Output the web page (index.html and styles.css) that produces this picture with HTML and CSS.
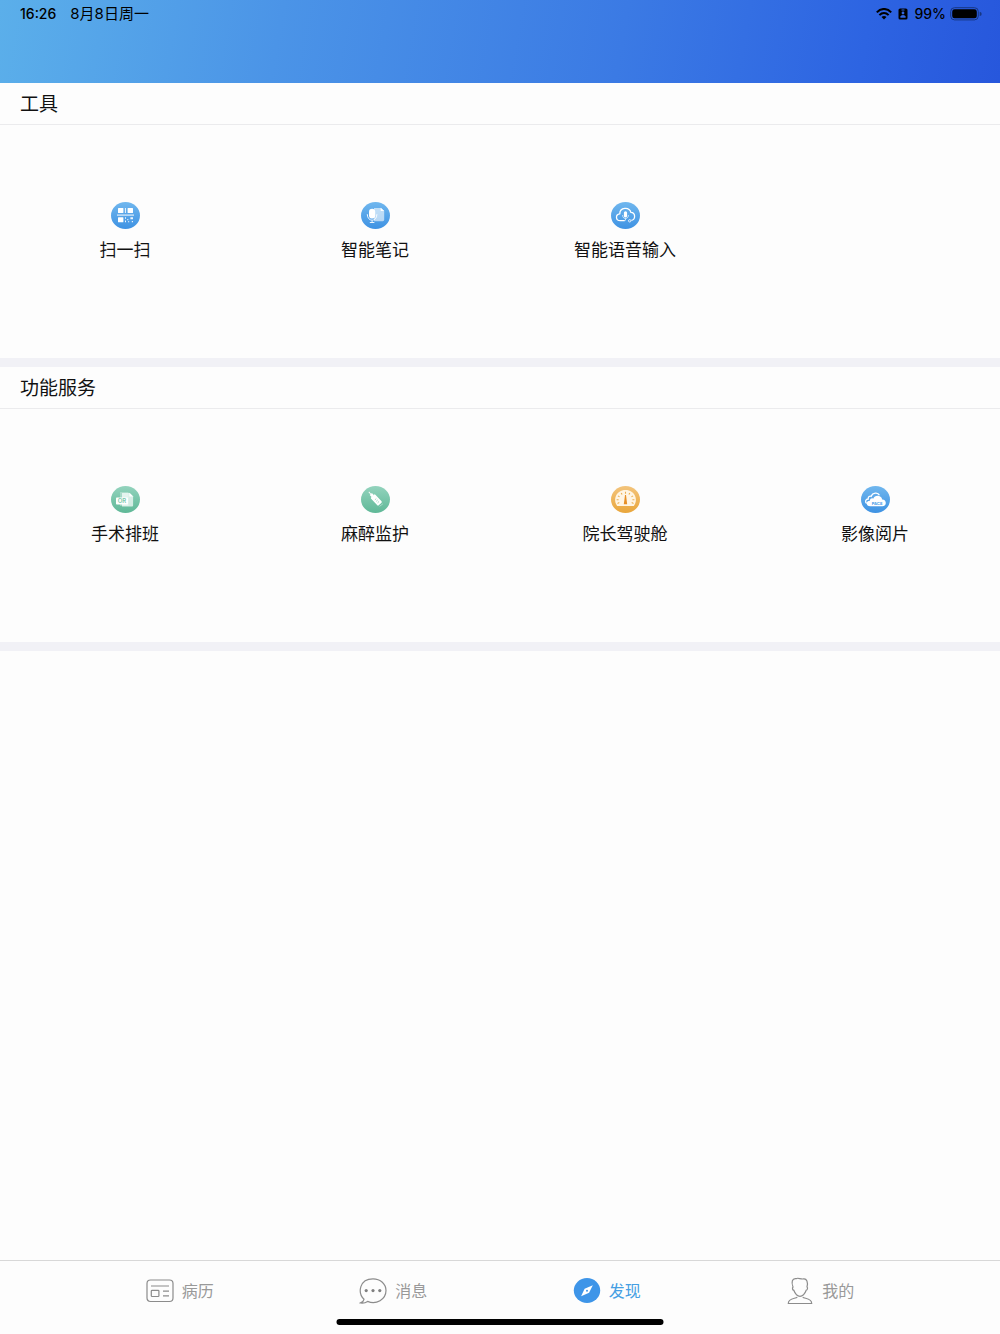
FILE: index.html
```html
<!DOCTYPE html>
<html lang="zh-CN">
<head>
    <meta charset="UTF-8">
    <meta name="viewport" content="width=device-width, initial-scale=1.0">
    <title>发现</title>
    <link rel="stylesheet" href="styles.css">
</head>
<body>

<!-- Gradients shared by the round icons -->
<svg class="defs" width="0" height="0" aria-hidden="true">
    <defs>
        <linearGradient id="blue" x1="0" y1="0" x2="0" y2="1">
            <stop offset="0" stop-color="#70b7ee"/>
            <stop offset="1" stop-color="#3e92e3"/>
        </linearGradient>
        <linearGradient id="green" x1="0" y1="0" x2="0" y2="1">
            <stop offset="0" stop-color="#93d3bd"/>
            <stop offset="1" stop-color="#5fb897"/>
        </linearGradient>
        <linearGradient id="orange" x1="0" y1="0" x2="0" y2="1">
            <stop offset="0" stop-color="#f3c47c"/>
            <stop offset="1" stop-color="#e9a63b"/>
        </linearGradient>
    </defs>
</svg>

<header class="header">
    <div class="status-bar">
        <div class="status-group status-left">
            <span>16:26</span>
            <span class="status-date">8月8日周一</span>
        </div>
        <div class="status-group">
            <svg width="16" height="12" viewBox="0 0 16 12" aria-hidden="true">
                <g fill="none" stroke="#000" stroke-width="2">
                    <path d="M.8 4.4C5-.2 11-.2 15.2 4.4"/>
                    <path d="M3.4 7.1c2.7-2.9 6.5-2.9 9.2 0"/>
                </g>
                <path d="M5.5 9.1c1.5-1.4 3.5-1.4 5 0L8 11.6z"/>
            </svg>
            <svg class="status-badge" width="10" height="12" viewBox="0 0 10 12" aria-hidden="true">
                <rect x=".5" y=".5" width="9" height="11" rx="1.6"/>
                <g fill="#3166e1">
                    <rect x="3.4" y="1.4" width="3.2" height="1" rx=".5"/>
                    <circle cx="5" cy="5" r="1.4"/>
                    <path d="M2.4 9.8V8.6Q2.8 7 5 7t2.6 1.6v1.2z"/>
                </g>
            </svg>
            <span>99%</span>
            <svg width="32" height="14" viewBox="0 0 32 14" aria-hidden="true">
                <rect x=".7" y=".7" width="27.6" height="12.2" rx="3.8" fill="none" stroke="#173783"/>
                <rect x="2.2" y="2.3" width="24.6" height="9" rx="2.4"/>
                <path d="M29.7 4.7q2 .5 2 2.2t-2 2.2z" fill="#173783"/>
            </svg>
        </div>
    </div>
</header>

<main class="content">
    <section class="section">
        <h2 class="section-title">工具</h2>
        <div class="grid">
            <a href="#" class="item">
                <svg class="item-icon" viewBox="0 0 29 27" aria-hidden="true">
                    <ellipse cx="14.5" cy="13.5" rx="14.5" ry="13.5" fill="url(#blue)"/>
                    <g fill="#fff">
                        <rect x="7" y="6" width="5.4" height="5" rx=".5"/>
                        <rect x="13.9" y="6" width="1" height="5" opacity=".9"/>
                        <rect x="16.6" y="6" width="5.4" height="5" rx=".5"/>
                        <rect x="6" y="12.4" width="17" height="1.4" opacity=".7"/>
                        <rect x="7" y="15.3" width="5.4" height="5" rx=".5"/>
                        <path d="M14 15.3h1v1.4h-1zM14 18.4h1v1.9h-1zM16.3 17h1v1.2h-1zM17 19.3h1.2v1H17zM19.4 15.3H22v2h-2.600zM20.800 18.900H22v1.400h-1.200z" opacity=".9"/>
                    </g>
                </svg>
                <span class="item-label">扫一扫</span>
            </a>
            <a href="#" class="item">
                <svg class="item-icon" viewBox="0 0 29 27" aria-hidden="true">
                    <ellipse cx="14.5" cy="13.5" rx="14.5" ry="13.5" fill="url(#blue)"/>
                    <path d="M13 6h7l3.2 3v8.800q0 1.400-1.400 1.400H13z" fill="#fff" opacity=".6"/>
                    <path d="M19.7 5.8V9h3.6z" fill="#fff"/>
                    <rect x="8" y="6.700" width="6.200" height="9.800" rx="3.100" fill="#fff"/>
                    <path d="M6.300 12.200c0 8 9.600 8 9.600 0M11.100 18.400v2M8.800 20.500h4.600" fill="none" stroke="#fff" stroke-width=".9"/>
                </svg>
                <span class="item-label">智能笔记</span>
            </a>
            <a href="#" class="item">
                <svg class="item-icon" viewBox="0 0 29 27" aria-hidden="true">
                    <ellipse cx="14.5" cy="13.5" rx="14.5" ry="13.5" fill="url(#blue)"/>
                    <path d="M13.800 18.600H9.300c-5 0-5-6.200-.5-6.800 0-6.700 9.500-7.200 11.100-1.400 4.700.3 5 7 .5 8" fill="none" stroke="#fff" stroke-width="1.300"/>
                    <circle cx="18.700" cy="18.800" r="1.200" fill="none" stroke="#fff" stroke-width=".8"/>
                    <rect x="12.900" y="9.200" width="3.200" height="6.300" rx="1.600" fill="#fff"/>
                    <path d="M11.600 13.100c0 4.600 5.800 4.600 5.800 0M14.500 16.500v2" fill="none" stroke="#fff" stroke-width=".7"/>
                </svg>
                <span class="item-label">智能语音输入</span>
            </a>
        </div>
    </section>

    <section class="section">
        <h2 class="section-title">功能服务</h2>
        <div class="grid">
            <a href="#" class="item">
                <svg class="item-icon" viewBox="0 0 29 27" aria-hidden="true">
                    <ellipse cx="14.5" cy="13.5" rx="14.5" ry="13.5" fill="url(#green)"/>
                    <path d="M9 6h8.5v14H9z" fill="#fff" opacity=".3"/>
                    <path d="M11 7h7.600l3.500 3.400v9.200q0 1-1 1H11z" fill="#fff" opacity=".7"/>
                    <path d="M18.4 6.8v3.8h3.9z" fill="#fff"/>
                    <rect x="5" y="11.5" width="12" height="7" rx=".8" fill="#fff"/>
                    <text x="11" y="17.200" class="icon-text icon-text-green">OR</text>
                </svg>
                <span class="item-label">手术排班</span>
            </a>
            <a href="#" class="item">
                <svg class="item-icon" viewBox="0 0 29 27" aria-hidden="true">
                    <ellipse cx="14.5" cy="13.5" rx="14.5" ry="13.5" fill="url(#green)"/>
                    <g transform="translate(14.6 13.200) rotate(-43)" fill="#fff">
                        <rect x="-2.900" y="-4.400" width="5.800" height="11" rx="1"/>
                        <rect x="-1.500" y="-7" width="3" height="3"/>
                        <rect x="-.4" y="-10" width=".8" height="3.500"/>
                        <path d="M-1 0H1M-1 2H1M-1 4H1" stroke="#72c3a5" stroke-width=".6"/>
                    </g>
                    <path d="M18.500 20.400l3.400-2.600" stroke="#b9e1d2" stroke-width=".8"/>
                </svg>
                <span class="item-label">麻醉监护</span>
            </a>
            <a href="#" class="item">
                <svg class="item-icon" viewBox="0 0 29 27" aria-hidden="true">
                    <ellipse cx="14.5" cy="13.5" rx="14.5" ry="13.5" fill="url(#orange)"/>
                    <path d="M6.200 20C1.500 14 5 4 14.500 4s13 10 8.300 16z" fill="#fff5e4"/>
                    <path d="M14.500 5.800v2M10.200 6.900l.9 1.700M18.800 6.900l-.9 1.700M6.900 9.900l1.700 1M22.100 9.900l-1.700 1M5.600 13.700h2M23.400 13.700h-2M6.500 17.400l1.800-.8M22.500 17.400l-1.800-.8" stroke="#ebaf51" stroke-width="1.100"/>
                    <path d="M14 9h1l1.200 9.200h-3.400z" fill="#e78f25"/>
                </svg>
                <span class="item-label">院长驾驶舱</span>
            </a>
            <a href="#" class="item">
                <svg class="item-icon" viewBox="0 0 29 27" aria-hidden="true">
                    <ellipse cx="14.5" cy="13.5" rx="14.5" ry="13.5" fill="url(#blue)"/>
                    <path d="M5.600 17.400c-2-1.800-.8-4.400 1.600-4.400-.2-2.200 1.500-3.300 3-2.700C11.600 6.500 17 6 18.400 9.200" fill="none" stroke="#fff" stroke-width="1.300"/>
                    <path d="M9.300 20.200c-4.800 0-4.500-5.600-.4-5.500.2-2.200 2-2.800 3.300-2 1.400-4.300 8.300-3.700 9 .7 4.800 0 4.800 6.800.2 6.800z" fill="#fff"/>
                    <text x="16" y="18.700" class="icon-text icon-text-blue">PACS</text>
                </svg>
                <span class="item-label">影像阅片</span>
            </a>
        </div>
    </section>
</main>

<nav class="tab-bar">
    <a href="#" class="tab">
        <svg class="tab-icon" viewBox="0 0 28 28" aria-hidden="true">
            <rect x="1" y="3" width="26" height="21.5" rx="3.5"/>
            <path d="M5 9h18M17 14.200h6M17 18.800h6"/>
            <rect x="5.300" y="13.300" width="7.600" height="6.200" rx=".8"/>
        </svg>
        <span class="tab-label">病历</span>
    </a>
    <a href="#" class="tab">
        <svg class="tab-icon" viewBox="0 0 28 28" aria-hidden="true">
            <path d="M5 22.300C-1.500 16 .2 1.800 14 1.800c7.500 0 13 5.200 13 11.800 0 8.900-9.800 14.500-18.400 10.800-1.800 1.200-4.300 1.900-7 1.500 1.900-.9 3.100-2 3.400-3.600z"/>
            <g class="dots">
                <circle cx="7.200" cy="13.600" r="1.600"/>
                <circle cx="14" cy="13.600" r="1.600"/>
                <circle cx="20.800" cy="13.600" r="1.600"/>
            </g>
        </svg>
        <span class="tab-label">消息</span>
    </a>
    <a href="#" class="tab active" aria-current="page">
        <svg class="tab-icon" viewBox="0 0 28 28" aria-hidden="true">
            <g stroke="none">
                <ellipse cx="14" cy="13.500" rx="13.200" ry="12.500" fill="#3e95e8"/>
                <path d="M19.800 8.300l-3.700 7.500-8 3.500 3.500-7.500z" fill="#fff"/>
                <circle cx="14" cy="13.700" r="1" fill="#3e95e8"/>
            </g>
        </svg>
        <span class="tab-label">发现</span>
    </a>
    <a href="#" class="tab">
        <svg class="tab-icon" viewBox="0 0 28 28" aria-hidden="true">
            <path d="M7 10C5 5 6.300 1.200 10 1.700 12 .2 14.500 2.500 17.500 1.900 20.800 1.500 22.200 5 21 9.800 22.200 11 21.200 13 20.200 13.300 19 16.500 16.700 19.300 14 19.300S9 16.500 7.800 13.300C6.500 13 6 11.200 7 10z"/>
            <path d="M11.300 20.300C9 21.800 2.300 20.800 2.300 26.500H25.700C25.700 20.800 19 21.800 16.700 20.300"/>
        </svg>
        <span class="tab-label">我的</span>
    </a>
    <div class="home-indicator"></div>
</nav>

</body>
</html>
```

FILE: styles.css
```css
* {
    box-sizing: border-box;
}

body {
    margin: 0;
    min-height: 100vh;
    display: flex;
    flex-direction: column;
    background: #fdfdfd;
    color: #111;
    font-family: "Inter", "Noto Sans CJK SC", sans-serif;
}

a {
    color: inherit;
    text-decoration: none;
}

.defs {
    position: absolute;
}

/* Header */
.header {
    height: 83px;
    background: linear-gradient(100deg, #5bafea 0%, #4b94e7 28%, #3b7ae4 62%, #2d64e2 86%, #2757dc 100%);
}

.status-bar {
    display: flex;
    justify-content: space-between;
    padding: 4px 18px 0 20px;
    color: #000;
    font-size: 14px;
    font-weight: 500;
    line-height: 20px;
}

.status-group {
    display: flex;
    align-items: center;
    gap: 4px;
}

.status-left {
    gap: 14px;
}

.status-date {
    font-size: 15px;
    font-weight: 400;
}

.status-badge {
    margin: 0 2px;
}

/* Sections */
.content {
    flex: 1;
}

.section {
    border-bottom: 9px solid #f1f1f6;
}

.section-title {
    margin: 0;
    padding: 2px 20px 0;
    border-bottom: 1px solid #ebebed;
    font-size: 19px;
    font-weight: 400;
    line-height: 39px;
}

.grid {
    display: grid;
    grid-template-columns: repeat(4, 1fr);
}

.item {
    display: flex;
    flex-direction: column;
    align-items: center;
    gap: 9px;
    aspect-ratio: 250 / 233;
    padding-top: 77px;
}

.item-icon {
    width: 29px;
    height: 27px;
}

.item-label {
    font-size: 17px;
    line-height: 24px;
}

.icon-text {
    font-family: "Inter", sans-serif;
    font-weight: 600;
    text-anchor: middle;
}

.icon-text-green {
    font-size: 6px;
    fill: #7cc8ac;
}

.icon-text-blue {
    font-size: 4px;
    font-weight: 700;
    fill: #4c9ce6;
}

/* Tab bar */
.tab-bar {
    position: relative;
    display: grid;
    grid-template-columns: repeat(4, 1fr);
    align-items: start;
    height: 74px;
    padding: 15px 73px 0;
    border-top: 1px solid #d8d8d8;
}

.tab {
    display: flex;
    justify-content: center;
    align-items: center;
    gap: 8px;
    color: #999;
    font-size: 16px;
    line-height: 28px;
}

.tab.active {
    color: #459fe3;
}

.tab-label {
    padding-top: 1px;
}

.tab-icon {
    width: 28px;
    height: 28px;
    fill: none;
    stroke: #8c8c8c;
    stroke-width: 1.2;
}

.dots {
    fill: #808080;
    stroke: none;
}

.home-indicator {
    position: absolute;
    left: 50%;
    bottom: 9px;
    width: 327px;
    height: 6px;
    border-radius: 3px;
    background: #000;
    transform: translateX(-50%);
}
```
